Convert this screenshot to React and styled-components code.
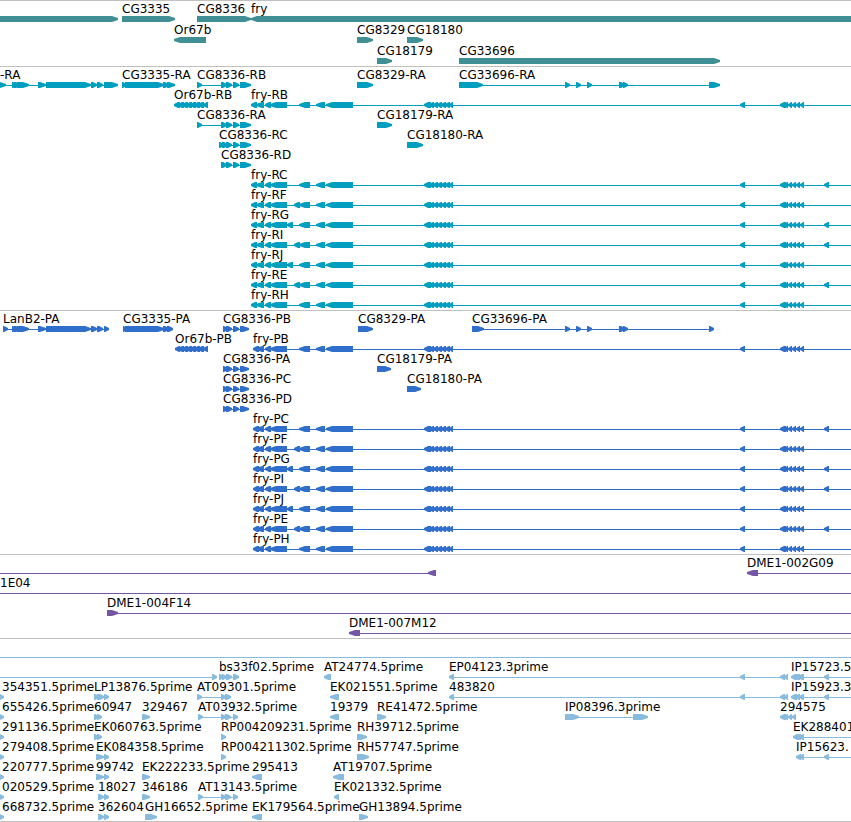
import React from "react";
import styled, { createGlobalStyle } from "styled-components";

const PageStyle = createGlobalStyle`
  body {
    margin: 0;
    background: #ffffff;
    overflow-x: hidden;
  }
`;

const Browser = styled.main`
  display: flex;
  flex-direction: column;
  overflow: hidden;
  border-bottom: 1px solid #c0c0c0;
  color: #000000;
  font-family: "DejaVu Sans", sans-serif;
  font-size: 12px;
  line-height: 14px;
`;

const Track = styled.section`
  display: flex;
  flex-direction: column;
  gap: ${(p) => p.$gap}px;
  padding: 1px 0 ${(p) => p.$bottom}px;
  border-top: 1px solid #c0c0c0;
  color: ${(p) => p.$color};
`;

const Row = styled.div`
  display: flex;
  flex-direction: column;
`;

const Labels = styled.div`
  position: relative;
  height: 14px;
`;

/* Labels sit at the start coordinate of their feature. */
const Label = styled.span`
  position: absolute;
  top: 0;
  color: #000000;
  white-space: nowrap;
`;

const Glyphs = styled.svg`
  display: block;
  width: 100%;
  height: 6px;
  fill: currentColor;
`;

const END = Infinity;

// A feature: label, label start, strand, exons, and the span of its intron line.
const fwd = (label, exons, line, at) => ({ label, exons, line, at, dir: 1 });
const rev = (label, exons, line, at) => ({ label, exons, line, at, dir: -1 });

const genes = [
  [
    fwd("", [[-20, 118]]),
    fwd("CG3335", [[122, 175]]),
    fwd("CG8336", [[197, 251]]),
    rev("fry", [[251, 5000]]),
  ],
  [
    rev("Or67b", [[174, 206]]),
    fwd("CG8329", [[357, 373]]),
    fwd("CG18180", [[407, 423]]),
  ],
  [fwd("CG18179", [[377, 392]]), fwd("CG33696", [[459, 720]])],
];

const lanStart = [[12, 17], [14, 20], [17, 29], [38, 46]];
const or67 = [[178, 184], [182, 188], [186, 192], [190, 196], [194, 200], [198, 204], [203, 208]];
const cg33696 = [[565, 570], [576, 581], [587, 592], [619, 625], [623, 628]];
const cg8336 = [[226, 232], [233, 239]];
const fryMiddle = [
  [265, 271], [270, 287], [299, 310], [316, 325], [326, 353],
  [424, 431], [429, 434], [433, 438], [437, 442], [441, 446], [445, 450], [449, 453],
  [740, 745],
  [780, 786], [784, 788], [788, 792], [792, 796], [796, 800], [800, 804],
];

const fry = (kind, start, isoform) => {
  const extra = [];
  if ("FIE".includes(isoform)) extra.push([294, 300]);
  if ("GJ".includes(isoform)) extra.push([287, 293]);
  if ("CGIE".includes(isoform)) extra.push([824, 829]);
  return rev(
    `fry-${kind}${isoform}`,
    [[start, start + 6], [256, 264], ...fryMiddle, ...extra],
    [start, END]
  );
};

const transcripts = [
  [
    fwd("-RA", [[-4, 6], ...lanStart, [46, 91], [91, 97], [97, 103], [104, 118]], [0, 118], 0),
    fwd("CG3335-RA", [[122, 127], [125, 164], [163, 169], [167, 175]], [122, 175]),
    fwd("CG8336-RB", [[197, 202], [221, 227], ...cg8336, [240, 251]], [197, 251]),
    fwd("CG8329-RA", [[357, 373]]),
    fwd("CG33696-RA", [[459, 483], ...cg33696, [709, 720]], [459, 720]),
  ],
  [rev("Or67b-RB", [[174, 180], ...or67]), fry("R", 251, "B")],
  [
    fwd("CG8336-RA", [[197, 202], [221, 227], ...cg8336, [240, 251]], [197, 251]),
    fwd("CG18179-RA", [[377, 392]]),
  ],
  [
    fwd("CG8336-RC", [[219, 224], [222, 228], ...cg8336, [240, 251]], [219, 251]),
    fwd("CG18180-RA", [[407, 423]]),
  ],
  [fwd("CG8336-RD", [[221, 227], ...cg8336, [240, 251]], [221, 251])],
  ...["C", "F", "G", "I", "J", "E", "H"].map((i) => [fry("R", 251, i)]),
];

const cg8336Protein = (label) =>
  fwd(label, [[223, 228], [226, 232], [233, 239], [240, 249]], [223, 249]);

const proteins = [
  [
    fwd("LanB2-PA", [[3, 8], ...lanStart, [46, 91], [91, 97], [97, 103], [104, 109]], [3, 109]),
    fwd("CG3335-PA", [[123, 127], [125, 164], [163, 169], [167, 173]], [123, 173]),
    cg8336Protein("CG8336-PB"),
    fwd("CG8329-PA", [[358, 373]]),
    fwd("CG33696-PA", [[472, 484], ...cg33696, [709, 714]], [472, 714]),
  ],
  [rev("Or67b-PB", [[175, 180], ...or67]), fry("P", 253, "B")],
  [cg8336Protein("CG8336-PA"), fwd("CG18179-PA", [[377, 391]])],
  [cg8336Protein("CG8336-PC"), fwd("CG18180-PA", [[407, 421]])],
  [cg8336Protein("CG8336-PD")],
  ...["C", "F", "G", "I", "J", "E", "H"].map((i) => [fry("P", 253, i)]),
];

const clones = [
  [
    rev("", [[428, 436]], [0, 436]),
    rev("DME1-002G09", [[747, 758]], [747, END]),
  ],
  [fwd("1E04", [], [0, END], 0)],
  [fwd("DME1-004F14", [[107, 118]], [107, END])],
  [rev("DME1-007M12", [[349, 360]], [349, END])],
];

const leftEdge = (label) => fwd(label, [[-3, 4]], null, 2);
const insertion = (label) =>
  rev(label, [[449, 454], [740, 745], [780, 785], [784, 788]], [449, 788]);

const ests = [
  [fwd("", [], [0, END])],
  [
    fwd("", [[212, 217]], [0, 217]),
    fwd("bs33f02.5prime", [[219, 224], [222, 227], [226, 232], [233, 239]], [219, 239]),
    rev("AT24774.5prime", [[324, 331]]),
    insertion("EP04123.3prime"),
    rev("IP15723.5", [[791, 797], [794, 800], [798, 804], [824, 829]], [791, END]),
  ],
  [
    leftEdge("354351.5prime"),
    fwd("LP13876.5prime", [[94, 99], [97, 104], [104, 109]], [94, 109]),
    fwd("AT09301.5prime", [[197, 202], [221, 226], [225, 231]], [197, 231]),
    rev("EK021551.5prime", [[330, 339]]),
    insertion("483820"),
    rev("IP15923.3", [[791, 797], [795, 800], [799, 804], [824, 829]], [791, END]),
  ],
  [
    leftEdge("655426.5prime"),
    fwd("60947", [[94, 99], [97, 102]]),
    fwd("329467", [[142, 150]]),
    fwd("AT03932.5prime", [[198, 203], [221, 226], [225, 231], [233, 238]], [198, 238]),
    rev("19379", [[330, 339]]),
    fwd("RE41472.5prime", [[377, 386]]),
    fwd("IP08396.3prime", [[565, 579], [633, 648]], [565, 648]),
    rev("294575", [[780, 786], [784, 788], [788, 792], [792, 796]]),
  ],
  [
    leftEdge("291136.5prime"),
    fwd("EK060763.5prime", [[94, 99], [97, 102]]),
    fwd("RP004209231.5prime", [[221, 226]]),
    fwd("RH39712.5prime", [[357, 367]]),
    rev("EK288401", [[793, 799], [796, 801], [799, 804]], [793, END]),
  ],
  [
    leftEdge("279408.5prime"),
    fwd("EK084358.5prime", [[96, 104], [104, 109]], [96, 109]),
    fwd("RP004211302.5prime", [[221, 226]]),
    fwd("RH57747.5prime", [[357, 369]]),
    rev("IP15623.", [[796, 801], [799, 804], [824, 829]], [796, END]),
  ],
  [
    leftEdge("220777.5prime"),
    fwd("99742", [[96, 104], [104, 109]], [96, 109]),
    fwd("EK222233.5prime", [[142, 150]]),
    rev("295413", [[252, 262]]),
    rev("AT19707.5prime", [[333, 344]]),
  ],
  [
    leftEdge("020529.5prime"),
    fwd("18027", [[98, 104], [104, 109]], [98, 109]),
    fwd("346186", [[142, 150]]),
    fwd("AT13143.5prime", [[198, 203], [221, 226], [225, 231], [233, 238]], [198, 238]),
    rev("EK021332.5prime", [[334, 339]]),
  ],
  [
    leftEdge("668732.5prime"),
    fwd("362604", [[98, 104], [104, 109]], [98, 109]),
    fwd("GH16652.5prime", [[145, 157]]),
    rev("EK179564.5prime", [[252, 262]]),
    fwd("GH13894.5prime", [[359, 368]]),
  ],
];

const tracks = [
  { id: "genes", color: "#3f8f94", rows: genes, gap: 1, bottom: 2 },
  { id: "transcripts", color: "#009fc0", rows: transcripts, gap: 0, bottom: 2 },
  { id: "proteins", color: "#306ecc", rows: proteins, gap: 0, bottom: 2 },
  { id: "clones", color: "#7456a5", rows: clones, gap: 0, bottom: 2 },
  { id: "ests", color: "#88bbdd", rows: ests, gap: 0, bottom: 1 },
];

// A bar whose 3' end narrows in steps to a two-pixel-high tip.
function Exon({ start, end, dir }) {
  const width = end - start;
  const shoulder = width > 7 ? 6 : Math.min(4, width - 1);
  const neck = width > 7 ? 3 : 2;
  const nose = dir > 0 ? end : start;
  const back = dir > 0 ? start : end;
  const x = (distance) => nose - dir * distance;
  const points = [
    [back, 0],
    [x(shoulder), 0],
    [x(neck), 1],
    [nose, 2],
    [nose, 4],
    [x(neck), 5],
    [x(shoulder), 6],
    [back, 6],
  ];
  return <polygon points={points.map((p) => p.join(",")).join(" ")} />;
}

function Feature({ feature }) {
  const { exons, line, dir } = feature;
  return (
    <g>
      {line && (
        <rect
          x={line[0]}
          y="3"
          width={line[1] === END ? "100%" : line[1] - line[0]}
          height="1"
        />
      )}
      {exons.map(([start, end]) => (
        <Exon key={start} start={start} end={end} dir={dir} />
      ))}
    </g>
  );
}

function FeatureRow({ features }) {
  return (
    <Row>
      <Labels>
        {features
          .filter((f) => f.label)
          .map((f) => (
            <Label key={f.label} style={{ left: f.at ?? f.exons[0][0] }}>
              {f.label}
            </Label>
          ))}
      </Labels>
      <Glyphs aria-hidden="true">
        {features.map((f, i) => (
          <Feature key={i} feature={f} />
        ))}
      </Glyphs>
    </Row>
  );
}

export default function App() {
  return (
    <>
      <PageStyle />
      <Browser>
        {tracks.map((t) => (
          <Track key={t.id} $color={t.color} $gap={t.gap} $bottom={t.bottom}>
            {t.rows.map((features, i) => (
              <FeatureRow key={i} features={features} />
            ))}
          </Track>
        ))}
      </Browser>
    </>
  );
}
